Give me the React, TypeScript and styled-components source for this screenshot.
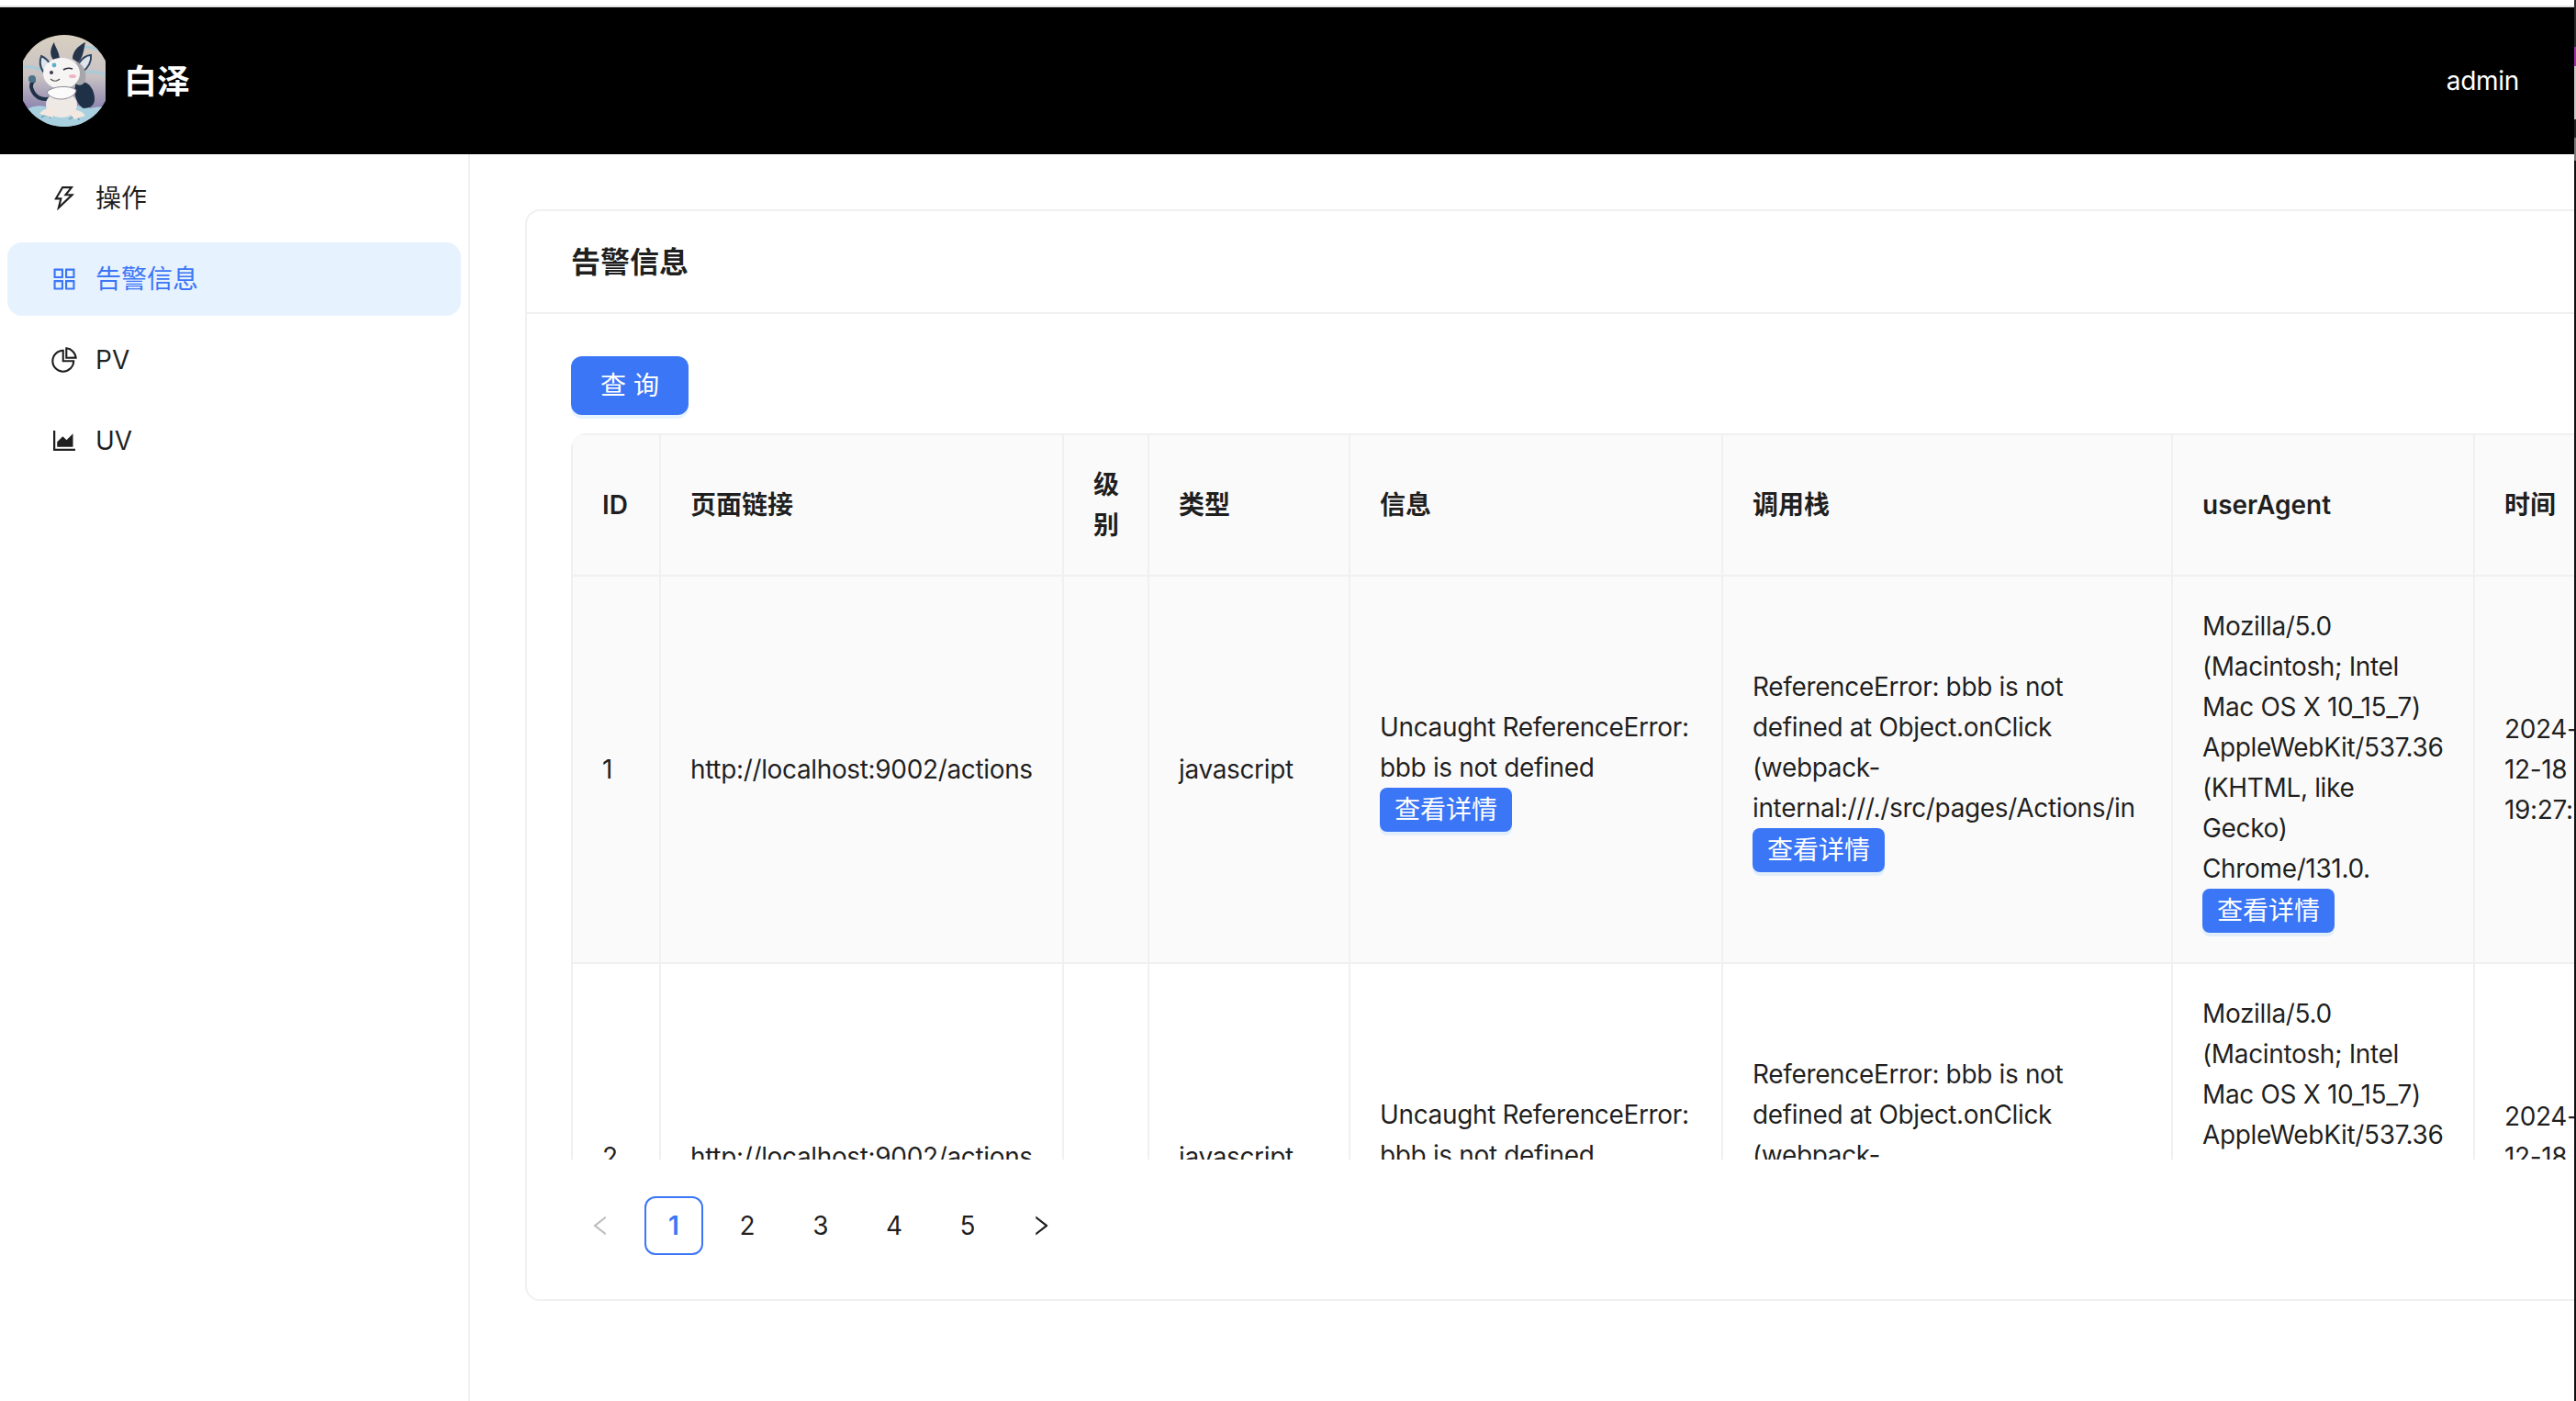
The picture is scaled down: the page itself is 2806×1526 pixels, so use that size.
import React from "react";
import styled, { createGlobalStyle } from "styled-components";
import {
  AiOutlineThunderbolt,
  AiOutlineAppstore,
  AiOutlinePieChart,
  AiOutlineAreaChart,
  AiOutlineLeft,
  AiOutlineRight,
} from "react-icons/ai";

const FONT = `Inter, "Noto Sans CJK SC", "Liberation Sans", sans-serif`;
const BLUE = "#3b76f6";
const LINE = "#f0f0f0";
const INK = "rgba(0,0,0,0.88)";

const Global = createGlobalStyle`
  html, body { margin: 0; padding: 0; background: #fff; overflow: hidden; }
  body { font-family: ${FONT}; font-size: 28px; line-height: 44px; color: ${INK}; }
  * { box-sizing: border-box; }
`;

const Page = styled.div`
  position: relative;
  width: 2806px;
  height: 1526px;
  overflow: hidden;
  display: flex;
  flex-direction: column;
`;
const TopRule = styled.div`
  height: 8px;
  flex: none;
  border-bottom: 2px solid #e4e4e4;
`;
const Header = styled.header`
  height: 160px;
  flex: none;
  background: #000;
  color: #fff;
  display: flex;
  align-items: center;
  justify-content: space-between;
  padding: 0 62px 0 25px;
`;
const Brand = styled.div`
  display: flex;
  align-items: center;
  gap: 20px;
`;
const BrandName = styled.span`
  font-size: 36px;
  font-weight: 600;
  line-height: 44px;
  margin-top: 2px;
`;
const Logo = styled.svg`
  width: 90px;
  height: 100px;
  display: block;
`;
const UserName = styled.span`
  font-size: 28px;
  letter-spacing: -0.3px;
`;
const Body = styled.div`
  flex: 1;
  display: flex;
  min-height: 0;
`;
const Sidebar = styled.nav`
  width: 512px;
  flex: none;
  border-right: 2px solid ${LINE};
  padding: 8px;
  display: flex;
  flex-direction: column;
  gap: 8px;
`;
const MenuItem = styled.div<{ $active?: boolean }>`
  height: 80px;
  width: 494px;
  border-radius: 16px;
  padding-left: 46px;
  display: flex;
  align-items: center;
  gap: 18px;
  background: ${(p) => (p.$active ? "#e7f2ff" : "transparent")};
  color: ${(p) => (p.$active ? BLUE : INK)};
  svg { font-size: 32px; flex: none; }
`;
const Main = styled.main`
  flex: 1;
  min-width: 0;
  overflow: hidden;
  padding: 60px 0 0 60px;
`;
const Card = styled.section`
  width: 2600px;
  height: 1189px;
  border: 2px solid ${LINE};
  border-radius: 16px;
  background: transparent;
`;
const CardHead = styled.div`
  height: 112px;
  padding: 2px 48px 0;
  display: flex;
  align-items: center;
  border-bottom: 2px solid ${LINE};
  font-size: 32px;
  font-weight: 600;
`;
const CardBody = styled.div`
  padding: 46px 48px 0;
`;
const QueryButton = styled.button`
  display: block;
  width: 128px;
  height: 64px;
  border: 0;
  border-radius: 12px;
  background: ${BLUE};
  color: #fff;
  font: 400 28px/44px ${FONT};
  box-shadow: 0 4px 0 rgba(5, 145, 255, 0.1);
  margin-bottom: 20px;
  padding: 0;
`;
const TableWrap = styled.div`
  height: 791px;
  overflow: hidden;
  border-radius: 16px 0 0 0;
`;
const Table = styled.table`
  table-layout: fixed;
  width: 2248px;
  border-collapse: separate;
  border-spacing: 0;
  border-top: 2px solid ${LINE};
  border-left: 2px solid ${LINE};
  border-radius: 16px 0 0 0;
`;
const Th = styled.th`
  background: #fafafa;
  font-weight: 600;
  text-align: left;
  padding: 32px;
  border-right: 2px solid ${LINE};
  border-bottom: 2px solid ${LINE};
  overflow-wrap: break-word;
`;
const Td = styled.td<{ $hover?: boolean }>`
  background: ${(p) => (p.$hover ? "#fafafa" : "transparent")};
  padding: 32px;
  border-right: 2px solid ${LINE};
  border-bottom: 2px solid ${LINE};
  vertical-align: middle;
  overflow-wrap: break-word;
  letter-spacing: -0.35px;
`;
const DetailButton = styled.button`
  display: block;
  width: 144px;
  height: 48px;
  padding: 0;
  border: 0;
  border-radius: 8px;
  background: ${BLUE};
  color: #fff;
  font: 400 28px/44px ${FONT};
  letter-spacing: 0;
  box-shadow: 0 4px 0 rgba(5, 145, 255, 0.1);
`;
const Pager = styled.div`
  display: flex;
  gap: 16px;
  margin-top: 40px;
`;
const PageItem = styled.div<{ $active?: boolean; $muted?: boolean }>`
  width: 64px;
  height: 64px;
  border-radius: 12px;
  display: flex;
  align-items: center;
  justify-content: center;
  border: 2px solid ${(p) => (p.$active ? BLUE : "transparent")};
  color: ${(p) => (p.$active ? BLUE : p.$muted ? "rgba(0,0,0,0.25)" : INK)};
  font-weight: ${(p) => (p.$active ? 600 : 400)};
  svg { font-size: 28px; }
`;
const Watermark = styled.svg`
  position: absolute;
  inset: 0;
  width: 2806px;
  height: 1526px;
  pointer-events: none;
`;
const WatermarkText = styled.text`
  font-family: "Liberation Sans", sans-serif;
  font-size: 32px;
  fill: rgba(0, 0, 0, 0.014);
`;
const EdgeStrip = styled.div`
  position: absolute;
  top: 0;
  right: 0;
  width: 2px;
  height: 100%;
  background: linear-gradient(
    to bottom,
    #2a2a2a 0 51px,
    #a12ea8 51px 72px,
    #c8c8c8 72px 130px,
    #222 130px 150px,
    #777 150px 175px,
    #111 175px
  );
`;

const COLS = [96, 439, 93, 219, 406, 490, 329, 176];
const HEADS = ["ID", "页面链接", "级别", "类型", "信息", "调用栈", "userAgent", "时间"];
const STACK =
  "ReferenceError: bbb is not defined at Object.onClick (webpack-internal:///./src/pages/Actions/in";
const AGENT =
  "Mozilla/5.0 (Macintosh; Intel Mac OS X 10_15_7) AppleWebKit/537.36 (KHTML, like Gecko) Chrome/131.0.";
const ROWS = [1, 2];
const PAGES = [1, 2, 3, 4, 5];
const MENU = [
  { label: "操作", Icon: AiOutlineThunderbolt },
  { label: "告警信息", Icon: AiOutlineAppstore, active: true },
  { label: "PV", Icon: AiOutlinePieChart },
  { label: "UV", Icon: AiOutlineAreaChart },
];
const MARK_LINES = ["668C89A63", "C056D7B889", "9A6C6E028B", "08"];

function markPositions() {
  const out: { x: number; y: number }[] = [];
  for (let i = -10; i <= 10; i++) {
    for (let j = -10; j <= 10; j++) {
      const x = 50 + i * 280 + j * 255;
      const y = 1310 - i * 278 + j * 257;
      if (x > -300 && x < 2850 && y > -50 && y < 1800) out.push({ x, y });
    }
  }
  return out;
}

function Mascot() {
  return (
    <Logo viewBox="0 0 90 100" aria-hidden="true">
      <defs>
        <clipPath id="logoClip">
          <circle cx="45" cy="50" r="50" />
        </clipPath>
        <linearGradient id="logoSky" x1="0" y1="0" x2="0" y2="1">
          <stop offset="0" stopColor="#d9d0c0" />
          <stop offset="0.45" stopColor="#c8c2c4" />
          <stop offset="0.78" stopColor="#9189b0" />
        </linearGradient>
      </defs>
      <g clipPath="url(#logoClip)">
        <rect width="90" height="100" fill="url(#logoSky)" />
        <path d="M0 36c8-3 14 0 20 2M60 14c8-2 18 0 30 4M66 42c8-4 16-2 24 2" fill="none" stroke="#a8cbd8" strokeWidth="3" />
        <path d="M0 84c10-8 22-8 30-4 14-4 34-4 44 0 6-2 12-2 16 0v20H0z" fill="#a9d0de" />
        <path d="M20 90c4-4 10-3 10 1M50 92c5-4 11-3 11 1" fill="none" stroke="#6f9bb2" strokeWidth="1.5" />
        <path d="M58 52c12-4 20 6 20 18 0 6-4 10-12 10-8-4-12-18-8-28z" fill="#1f3147" />
        <path d="M34 68C24 72 14 70 10 60c-2-4-1-9 3-11" fill="none" stroke="#1f3147" strokeWidth="4" />
        <circle cx="10" cy="48" r="4" fill="#4a7288" />
        <path d="M34 28c-6-6-4-14 0-20 1 6 6 10 6 20zM54 26c0-8 6-14 14-18-2 8-2 16-8 22z" fill="#26344a" />
        <path d="M22 40c-4-6-4-12-2-17 5 2 9 7 12 12zM60 32c4-6 9-10 14-10 1 7-3 14-9 18z" fill="#dfe4ea" stroke="#2f4560" strokeWidth="2" />
        <path d="M58 30c6 0 12 8 10 20-3 6-8 6-12 2z" fill="#a7a7ab" />
        <ellipse cx="42" cy="42" rx="20" ry="17" fill="#f6f5f4" />
        <ellipse cx="42" cy="76" rx="17" ry="14" fill="#efe9e6" />
        <path d="M26 62c6-6 24-8 32-2 0 6-10 10-16 10s-14-2-16-8z" fill="#fbfbfb" stroke="#8a8a92" strokeWidth="1" />
        <path d="M18 86c4-6 12-8 18-4l-4 8zM50 84c6-4 14-2 18 4l-12 4z" fill="#f2e8df" />
        <circle cx="34" cy="33" r="2.4" fill="#5fb0cf" />
        <path d="M44 38c3-2 7-2 10-1" fill="none" stroke="#2a2a38" strokeWidth="1.6" />
        <circle cx="31" cy="41" r="2" fill="#363a4c" />
        <ellipse cx="54" cy="45" rx="4" ry="2" fill="#f0b4c8" />
        <path d="M30 48c3 3 7 3 10 0" fill="none" stroke="#555" strokeWidth="1.2" />
      </g>
    </Logo>
  );
}

export default function App() {
  return (
    <Page>
      <Global />
      <TopRule />
      <Header>
        <Brand>
          <Mascot />
          <BrandName>白泽</BrandName>
        </Brand>
        <UserName>admin</UserName>
      </Header>
      <Body>
        <Sidebar>
          {MENU.map(({ label, Icon, active }) => (
            <MenuItem key={label} $active={active}>
              <Icon />
              <span>{label}</span>
            </MenuItem>
          ))}
        </Sidebar>
        <Main>
          <Card>
            <CardHead>告警信息</CardHead>
            <CardBody>
              <QueryButton>查 询</QueryButton>
              <TableWrap>
                <Table>
                  <colgroup>
                    {COLS.map((w, i) => (
                      <col key={i} style={{ width: w }} />
                    ))}
                  </colgroup>
                  <thead>
                    <tr>
                      {HEADS.map((h) => (
                        <Th key={h}>{h}</Th>
                      ))}
                    </tr>
                  </thead>
                  <tbody>
                    {ROWS.map((id) => {
                      const hover = id === 1;
                      return (
                        <tr key={id}>
                          <Td $hover={hover}>{id}</Td>
                          <Td $hover={hover}>http://localhost:9002/actions</Td>
                          <Td $hover={hover} />
                          <Td $hover={hover}>javascript</Td>
                          <Td $hover={hover}>
                            Uncaught ReferenceError: bbb is not defined
                            <DetailButton>查看详情</DetailButton>
                          </Td>
                          <Td $hover={hover}>
                            {STACK}
                            <DetailButton>查看详情</DetailButton>
                          </Td>
                          <Td $hover={hover}>
                            {AGENT}
                            <DetailButton>查看详情</DetailButton>
                          </Td>
                          <Td $hover={hover}>2024-12-18 19:27:10</Td>
                        </tr>
                      );
                    })}
                  </tbody>
                </Table>
              </TableWrap>
              <Pager>
                <PageItem $muted>
                  <AiOutlineLeft />
                </PageItem>
                {PAGES.map((n) => (
                  <PageItem key={n} $active={n === 1}>
                    {n}
                  </PageItem>
                ))}
                <PageItem>
                  <AiOutlineRight />
                </PageItem>
              </Pager>
            </CardBody>
          </Card>
        </Main>
      </Body>
      <Watermark aria-hidden="true">
        {markPositions().map(({ x, y }) => (
          <g key={`${x}-${y}`} transform={`translate(${x} ${y}) rotate(-45)`}>
            {MARK_LINES.map((t, i) => (
              <WatermarkText key={i} x={-10} y={11 + i * 38}>
                {t}
              </WatermarkText>
            ))}
          </g>
        ))}
      </Watermark>
      <EdgeStrip />
    </Page>
  );
}
